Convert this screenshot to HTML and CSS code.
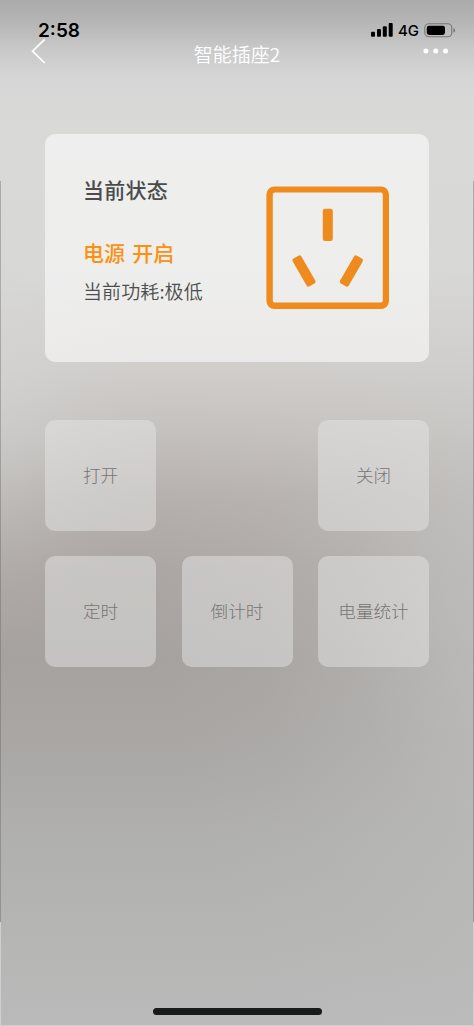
FILE: index.html
```
<!DOCTYPE html>
<html lang="zh-CN">
<head>
<meta charset="utf-8">
<title>智能插座2</title>
<link rel="stylesheet" href="styles.css">
</head>
<body>
<div class="screen">
  <header class="top">
    <div class="status">
      <span class="time">2:58</span>
      <div class="indicators">
        <svg class="signal" width="22" height="14" viewBox="0 0 22 14"><rect x="0" y="8.7" width="4" height="5" rx="1"/><rect x="6" y="6" width="4" height="7.7" rx="1"/><rect x="11.8" y="3.2" width="4" height="10.5" rx="1"/><rect x="17.7" y="0" width="4" height="13.7" rx="1"/></svg>
        <span class="network">4G</span>
        <svg class="battery" width="32" height="15" viewBox="0 0 32 15"><rect x=".8" y=".8" width="27" height="13" rx="4" fill="none" stroke="#777" stroke-width="1.1"/><rect x="2.8" y="2.7" width="18.2" height="9.2" rx="2.3"/><path d="M29.4 5.2q1.7.5 1.7 2.2t-1.7 2.2z" fill="#777"/></svg>
      </div>
    </div>
    <nav class="nav">
      <svg class="back" width="16" height="28" viewBox="0 0 16 28"><path d="M14.7 2.3 2.5 14.2 14.7 26" fill="none" stroke="#fff" stroke-width="1.7"/></svg>
      <h1 class="title">智能插座2</h1>
      <svg class="more" width="26" height="6" viewBox="0 0 26 6" fill="#fff"><circle cx="2.9" cy="3" r="2.5"/><circle cx="12.7" cy="3" r="2.5"/><circle cx="22.5" cy="3" r="2.5"/></svg>
    </nav>
  </header>
  <main class="content">
    <section class="card">
      <div class="info">
        <h2 class="heading">当前状态</h2>
        <p class="power">电源 开启</p>
        <p class="usage">当前功耗:极低</p>
      </div>
      <svg class="socket" width="124" height="124" viewBox="0 0 124 124"><path fill="#ef8a1d" fill-rule="evenodd" d="M8.4.4h106.600a8 8 0 0 1 8 8v106.600a8 8 0 0 1-8 8H8.400a8 8 0 0 1-8-8V8.400a8 8 0 0 1 8-8zM8.600 6.600a1.800 1.800 0 0 0-1.800 1.800v106.400a1.800 1.800 0 0 0 1.800 1.800h106.400a1.800 1.800 0 0 0 1.800-1.800V8.400a1.800 1.800 0 0 0-1.800-1.800z"/><g fill="#ef8a1d"><rect x="56.800" y="22.800" width="10" height="32.200" rx="2.200"/><rect x="-5" y="-16.100" width="10" height="32.200" rx="2.200" transform="translate(38 85) rotate(-30)"/><rect x="-5" y="-16.100" width="10" height="32.200" rx="2.200" transform="translate(85.400 85) rotate(30)"/></g></svg>
    </section>
    <section class="actions">
      <button class="tile">打开</button>
      <button class="tile last">关闭</button>
      <button class="tile">定时</button>
      <button class="tile">倒计时</button>
      <button class="tile">电量统计</button>
    </section>
  </main>
  <div class="home"></div>
  <div class="edge edge-left"></div>
  <div class="edge edge-right"></div>
</div>
</body>
</html>
```
FILE: styles.css
```
* { box-sizing: border-box; }
body { margin: 0; }
h1, h2, p { margin: 0; font-weight: 400; }
svg { display: block; flex: none; }

.screen {
  position: relative;
  display: flex;
  flex-direction: column;
  width: 474px;
  height: 1026px;
  overflow: hidden;
  border-bottom: 1px solid #d0d0d0;
  font-family: "Noto Sans CJK SC", sans-serif;
  background:
    radial-gradient(ellipse 380px 520px at 540px 610px, rgba(210, 212, 212, .56), rgba(210, 212, 212, .42) 25%, rgba(210, 212, 212, .2) 50%, rgba(210, 212, 212, .06) 75%, rgba(210, 212, 212, 0)),
    radial-gradient(ellipse 190px 240px at -30px 405px, rgba(214, 216, 216, .5), rgba(214, 216, 216, .35) 30%, rgba(214, 216, 216, .15) 58%, rgba(214, 216, 216, .04) 80%, rgba(214, 216, 216, 0)),
    linear-gradient(180deg, #aaa 0, #b4b4b4 20px, #c9c9c9 50px, #d6d6d6 78px, #d9d9d8 130px, #d8d8d6 270px, #d0cdcb 370px, #c5c1be 430px, #b5b0ad 500px, #aca7a4 570px, #a6a29f 660px, #a9a6a4 735px, #b0b0ae 840px, #b5b5b4 930px, #bababa 1026px);
}

.top { height: 133.5px; }
.status {
  display: flex;
  justify-content: space-between;
  align-items: center;
  height: 22px;
  margin-top: 19px;
  padding: 0 18px 0 38px;
}
.time {
  padding-top: 2px;
  font: 600 19px/22px Inter, sans-serif;
}
.indicators { display: flex; align-items: center; }
.network {
  width: 22px;
  margin: 1px 4px 0 5.5px;
  font: 500 15px/20px Inter, sans-serif;
  letter-spacing: -.1px;
}
.nav {
  display: grid;
  grid-template-columns: 1fr auto 1fr;
  align-items: center;
  height: 28px;
  margin-top: -3px;
  padding: 0 25px 0 30px;
}
.back, .more { margin-top: -4px; }
.title {
  margin-left: -5px;
  padding-top: 2px;
  font-size: 19px;
  font-weight: 350;
  line-height: 28px;
  color: #fff;
}
.more { justify-self: end; }

.content { padding: 0 45px; }
.card {
  display: flex;
  justify-content: space-between;
  align-items: center;
  height: 228px;
  padding: 0 39px 0 38px;
  border-radius: 10px;
  background: rgba(255, 255, 255, .56);
}
.info { height: 150px; }
.heading {
  font-size: 21px;
  font-weight: 500;
  letter-spacing: .25px;
  line-height: 30px;
  margin-top: 1px;
  color: #4b4b4b;
}
.power {
  margin-top: 33px;
  font-size: 21px;
  font-weight: 500;
  word-spacing: 2.5px;
  line-height: 30px;
  color: #fc9010;
}
.usage {
  margin-top: 10px;
  font-size: 19px;
  font-weight: 350;
  letter-spacing: .1px;
  line-height: 28px;
  color: #4d4d4d;
}

.actions {
  display: grid;
  grid-template-columns: repeat(3, 111px);
  grid-auto-rows: 111px;
  justify-content: space-between;
  row-gap: 25px;
  margin-top: 58px;
}
.tile {
  padding: 0 0 1px;
  border: 0;
  border-radius: 10px;
  background: rgba(233, 234, 233, .46);
  color: #767574;
  font-family: "Noto Sans CJK SC", sans-serif;
  font-size: 17.6px;
  font-weight: 300;
}
.last { grid-column: 3; }

.home {
  width: 169px;
  height: 7px;
  margin: auto auto 10px;
  border-radius: 4px;
  background: #191b1a;
}

/* Narrow seams along both sides of the screen */
.edge {
  position: absolute;
  top: 181px;
  width: 1px;
  height: 741px;
  background: rgba(90, 90, 90, .35);
}
.edge::after {
  content: "";
  position: absolute;
  top: 741px;
  width: 1px;
  height: 104px;
  background: #d0d0d0;
}
.edge-left { left: 0; }
.edge-right { right: 0; }
```
